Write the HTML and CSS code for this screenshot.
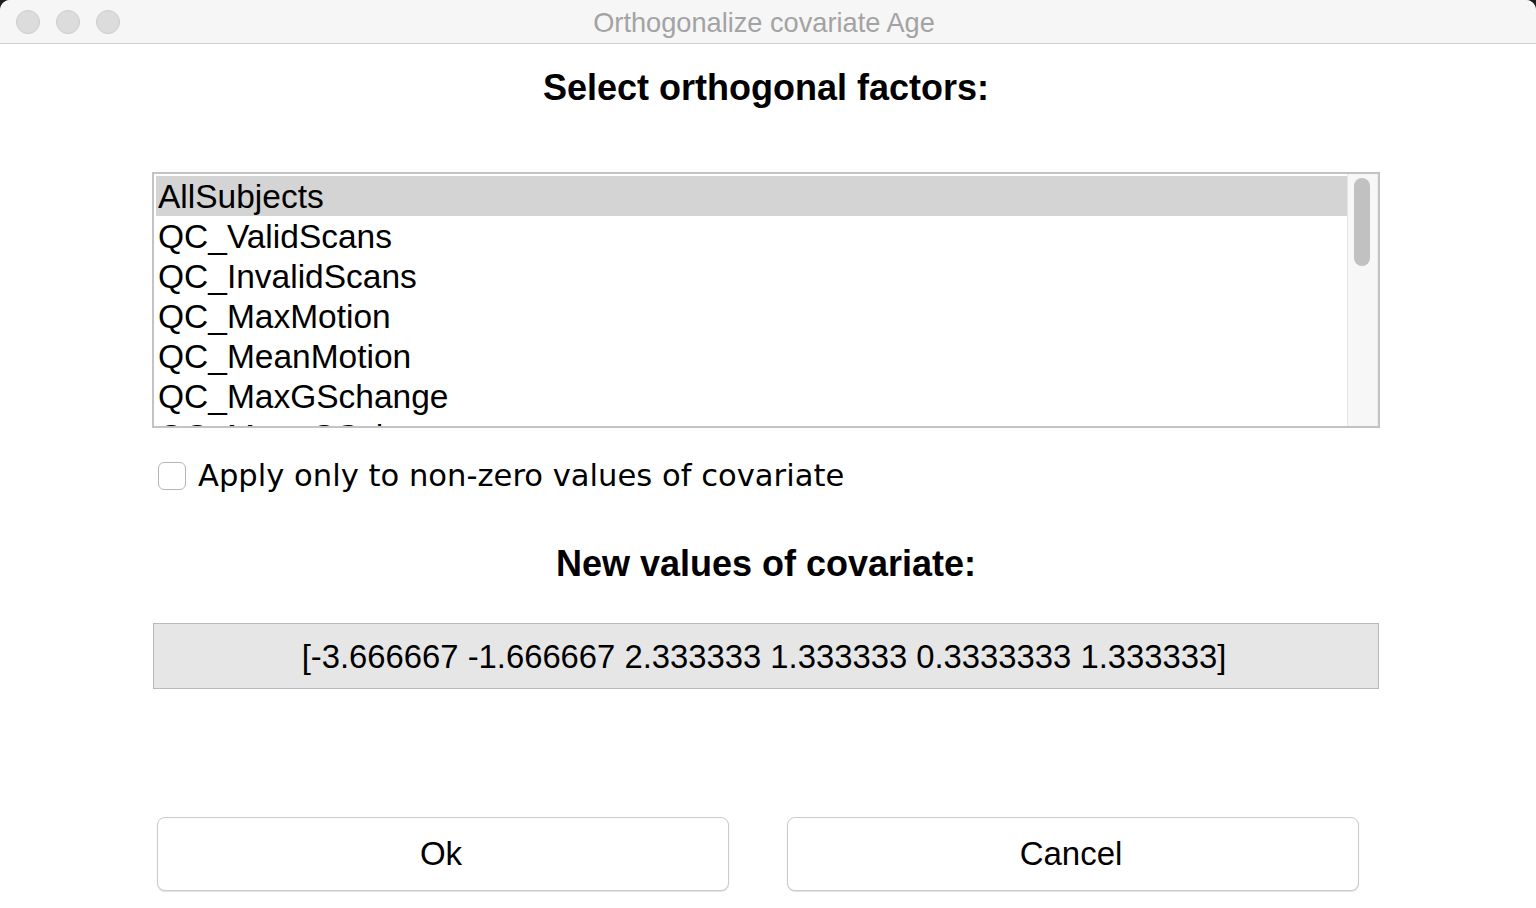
FILE: index.html
```html
<!DOCTYPE html>
<html>
<head>
<meta charset="utf-8">
<link rel="stylesheet" href="styles.css">
</head>
<body>
<div class="window">
  <div class="titlebar">
    <div class="lights">
      <span class="light"></span>
      <span class="light"></span>
      <span class="light"></span>
    </div>
    <div class="title">Orthogonalize covariate Age</div>
  </div>
  <div class="content">
    <h1 class="heading first">Select orthogonal factors:</h1>
    <div class="listbox">
      <div class="items">
        <div class="item selected">AllSubjects</div>
        <div class="item">QC_ValidScans</div>
        <div class="item">QC_InvalidScans</div>
        <div class="item">QC_MaxMotion</div>
        <div class="item">QC_MeanMotion</div>
        <div class="item">QC_MaxGSchange</div>
        <div class="item">QC_MeanGSchange</div>
      </div>
      <div class="scrollbar"><div class="thumb"></div></div>
    </div>
    <label class="checkrow">
      <span class="checkbox"></span>
      <span class="checklabel">Apply only to non-zero values of covariate</span>
    </label>
    <h2 class="heading second">New values of covariate:</h2>
    <div class="values">[-3.666667 -1.666667 2.333333 1.333333 0.3333333 1.333333]</div>
    <div class="buttons">
      <button class="btn">Ok</button>
      <button class="btn">Cancel</button>
    </div>
  </div>
</div>
</body>
</html>
```

FILE: styles.css
```css
html, body {
  margin: 0;
  padding: 0;
  background: #1e1e1e;
  height: 908px;
  overflow: hidden;
}
.window {
  width: 1536px;
  height: 908px;
  background: #ffffff;
  border-radius: 10px 10px 0 0;
  overflow: hidden;
  font-family: "Liberation Sans", Arial, sans-serif;
  color: #000;
}
.titlebar {
  height: 43px;
  background: #f6f6f6;
  border-bottom: 1px solid #d1d1d1;
  display: flex;
  align-items: center;
  position: relative;
}
.lights {
  display: flex;
  gap: 16px;
  padding-left: 16px;
}
.light {
  width: 22px;
  height: 22px;
  border-radius: 50%;
  background: #dcdcdc;
  border: 1px solid #cbcbcb;
}
.title {
  position: absolute;
  left: 0;
  right: 8px;
  top: 0;
  height: 43px;
  line-height: 46px;
  text-align: center;
  font-family: "Liberation Sans", Arial, sans-serif;
  font-size: 27.2px;
  color: #a3a3a3;
}
.content {
  display: flex;
  flex-direction: column;
  padding: 0 156px 0 152px;
}
.heading {
  margin: 0;
  font-weight: bold;
  font-size: 36px;
  line-height: 40px;
  text-align: center;
}
.heading.first {
  margin-top: 24px;
}
.heading.second {
  margin-top: 48px;
}
.listbox {
  margin-top: 64px;
  height: 252px;
  border: 2px solid #c3c3c3;
  display: flex;
  overflow: hidden;
  background: #fff;
}
.items {
  flex: 1;
  padding: 2px 0 0 2px;
  overflow: hidden;
}
.item {
  height: 40px;
  line-height: 41px;
  font-size: 33.5px;
  padding-left: 2px;
  white-space: nowrap;
}
.item.selected {
  background: #d4d4d4;
}
.scrollbar {
  width: 31px;
  background: #f7f7f7;
  border-left: 1px solid #e4e4e4;
  border-right: 1px solid #ececec;
  padding: 4px 0 0 6px;
  box-sizing: border-box;
}
.thumb {
  width: 16px;
  height: 88px;
  border-radius: 8px;
  background: #c1c1c1;
}
.checkrow {
  margin-top: 28px;
  height: 40px;
  display: flex;
  align-items: center;
  padding-left: 6px;
}
.checkbox {
  width: 26px;
  height: 26px;
  border: 1px solid #b4b4b4;
  border-radius: 6px;
  background: #fff;
  box-sizing: content-box;
}
.checklabel {
  margin-left: 12px;
  font-family: "DejaVu Sans", Verdana, sans-serif;
  font-size: 30.6px;
  line-height: 40px;
}
.values {
  margin-top: 39px;
  height: 64px;
  border: 1px solid #b9b9b9;
  background: #e6e6e6;
  text-align: center;
  line-height: 66px;
  font-size: 32.8px;
  margin-right: 1px;
  margin-left: 1px;
  padding-right: 4px;
}
.buttons {
  margin-top: 128px;
  display: flex;
  gap: 58px;
  padding-left: 5px;
}
.btn {
  width: 572px;
  height: 74px;
  border: 1px solid #cacaca;
  border-radius: 8px;
  background: #fff;
  box-shadow: 0 1px 1px rgba(0,0,0,0.12);
  font-family: "Liberation Sans", Arial, sans-serif;
  font-size: 33px;
  color: #000;
  padding: 0 4px 0 0;
  line-height: 70px;
}
```
